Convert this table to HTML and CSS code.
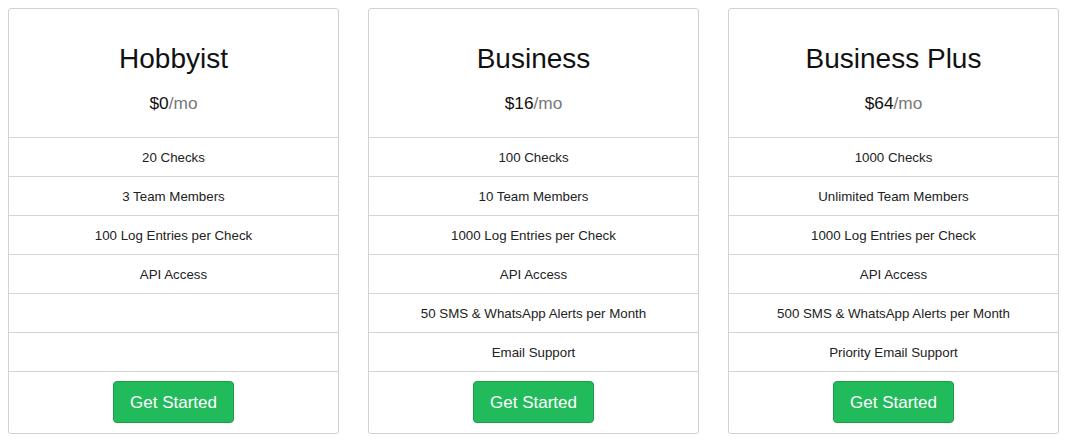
FILE: index.html
```html
<!DOCTYPE html>
<html>
<head>
<meta charset="utf-8">
<link rel="stylesheet" href="styles.css">
</head>
<body>
<div class="plans">
  <div class="plan">
    <div class="plan-head">
      <h1 class="plan-name">Hobbyist</h1>
      <div class="plan-price"><span class="amount">$0</span><span class="period">/mo</span></div>
    </div>
    <ul class="features">
      <li>20 Checks</li>
      <li>3 Team Members</li>
      <li>100 Log Entries per Check</li>
      <li>API Access</li>
      <li>&nbsp;</li>
      <li>&nbsp;</li>
    </ul>
    <div class="plan-foot"><a class="btn" href="#">Get Started</a></div>
  </div>
  <div class="plan">
    <div class="plan-head">
      <h1 class="plan-name">Business</h1>
      <div class="plan-price"><span class="amount">$16</span><span class="period">/mo</span></div>
    </div>
    <ul class="features">
      <li>100 Checks</li>
      <li>10 Team Members</li>
      <li>1000 Log Entries per Check</li>
      <li>API Access</li>
      <li>50 SMS &amp; WhatsApp Alerts per Month</li>
      <li>Email Support</li>
    </ul>
    <div class="plan-foot"><a class="btn" href="#">Get Started</a></div>
  </div>
  <div class="plan">
    <div class="plan-head">
      <h1 class="plan-name">Business Plus</h1>
      <div class="plan-price"><span class="amount">$64</span><span class="period">/mo</span></div>
    </div>
    <ul class="features">
      <li>1000 Checks</li>
      <li>Unlimited Team Members</li>
      <li>1000 Log Entries per Check</li>
      <li>API Access</li>
      <li>500 SMS &amp; WhatsApp Alerts per Month</li>
      <li>Priority Email Support</li>
    </ul>
    <div class="plan-foot"><a class="btn" href="#">Get Started</a></div>
  </div>
</div>
</body>
</html>
```

FILE: styles.css
```css
html, body {
  background: #fff;
}
body {
  margin: 8px;
  font-family: "Liberation Sans", Arial, sans-serif;
  font-size: 13.3px;
  color: #222;
}
.plans {
  display: grid;
  grid-template-columns: repeat(3, 331px);
  column-gap: 29px;
}
.plan {
  border: 1px solid #d2d2d2;
  border-radius: 3px;
  text-align: center;
  background: #fff;
}
.plan-head {
  padding: 33px 15px 23px;
}
.plan-name {
  margin: 0 0 16px;
  font-size: 28px;
  line-height: 34px;
  font-weight: normal;
  color: #111;
}
.plan-price {
  font-size: 17.3px;
  line-height: 22px;
}
.amount {
  color: #111;
}
.period {
  color: #777;
}
.features {
  list-style: none;
  margin: 0;
  padding: 0;
}
.features li {
  border-top: 1px solid #d5d5d5;
  padding: 11px 15px 9px;
  line-height: 18px;
  color: #222;
}
.plan-foot {
  border-top: 1px solid #d5d5d5;
  padding: 9px 0 10px;
}
.btn {
  display: inline-block;
  padding: 10px 16px 8px;
  font-size: 17px;
  line-height: 22px;
  color: #fff;
  background: #22bb5b;
  border: 1px solid #1a9e4a;
  border-radius: 4px;
  text-decoration: none;
}
```
